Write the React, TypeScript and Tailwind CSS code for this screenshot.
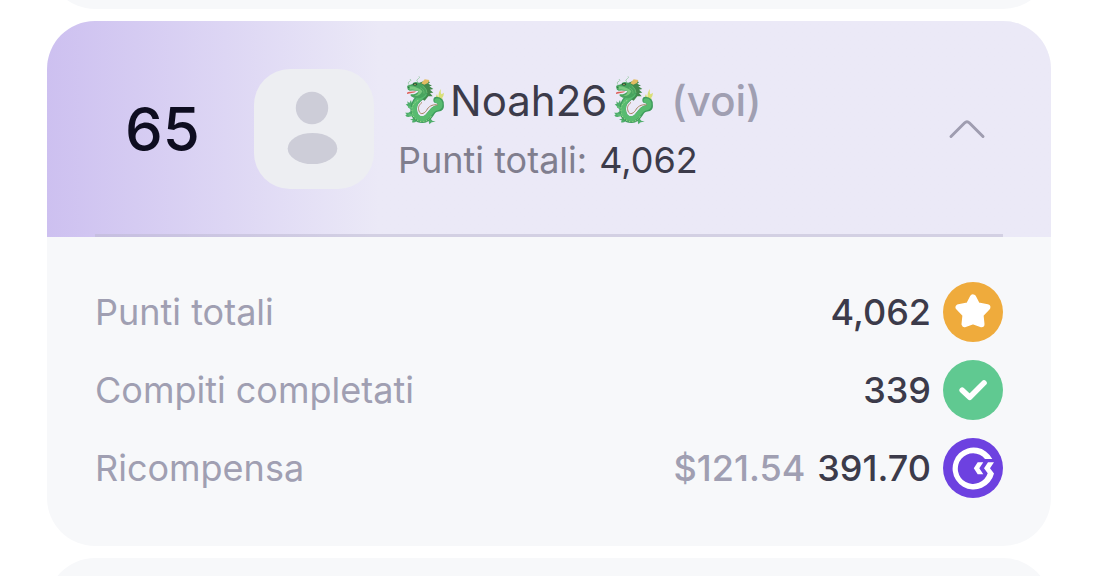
import { useState } from "react";
import type { ReactNode } from "react";

interface Stat {
  label: string;
  value: string;
  note?: string;
  icon: ReactNode;
}

const StarIcon = () => (
  <svg viewBox="0 0 60 60" className="size-15" aria-hidden="true">
    <circle cx="30" cy="30" r="30" fill="#efab3c" />
    <path
      d="M30 15.500L34 23.300L44.200 25.300L37.300 32.500L38.300 42L30 38.900L21.700 42L22.700 32.500L15.800 25.300L26 23.300Z"
      fill="#fff"
      stroke="#fff"
      strokeWidth="6.400"
      strokeLinejoin="round"
    />
  </svg>
);

const CheckIcon = () => (
  <svg viewBox="0 0 60 60" className="size-15" aria-hidden="true">
    <circle cx="30" cy="30" r="30" fill="#60c991" />
    <path
      d="M19.200 30.200L26.700 37.300L41 22.900"
      fill="none"
      stroke="#fff"
      strokeWidth="5.600"
      strokeLinecap="round"
      strokeLinejoin="round"
    />
  </svg>
);

const CoinIcon = () => (
  <svg viewBox="0 0 60 60" className="size-15" aria-hidden="true">
    <circle cx="30" cy="30" r="30" fill="#6d41e0" />
    <path
      d="M49.300 21A21 21 0 1 0 51 35.500L47 30.200L51 24.200H45L41 30.200L44.700 35.300A15.300 15.300 0 1 1 42 21Z"
      fill="#fff"
    />
    <path d="M34.700 24.200H40.300L36.300 30.200L40.300 36.200H34.700L30.800 30.200Z" fill="#fff" />
  </svg>
);

const Dragon = () => (
  <svg
    viewBox="0 0 156 174"
    className="inline-block h-[58px] w-[52px] align-middle"
    role="img"
    aria-label="🐉"
  >
    {/* tail tuft and feet */}
    <path
      d="M116 84Q112 72 117 66Q119 74 122 75Q120 62 129 51Q127 65 131 67L138 62Q138 72 131 80L135 79Q129 92 118 94Z"
      fill="#d9df78"
    />
    <path
      d="M46 112Q32 112 29 103L23 97L29 96L28 88L34 93L39 84L42 96L49 102ZM44 128Q32 140 22 131L26 127L21 122L31 122L44 115ZM62 138Q54 155 42 151L44 145L36 143L47 139L54 130ZM96 138L103 146L113 149L101 151L94 157L92 148L84 140Z"
      fill="#4fae6b"
    />
    {/* mane */}
    <path
      d="M62 33L86 24L96 31L91 35L102 41L94 43L106 51L96 53L106 62L96 63L104 73L91 73L80 86L66 78Z"
      fill="#438a4d"
    />
    <path d="M70 34L80 22L94 24L90 33L79 38Z" fill="#e3bc62" />
    {/* body */}
    <path
      d="M78 66C58 84 47 90 47 111C47 133 59 144 75 143C96 142 97 117 112 111C121 107 128 111 128 101C130 90 123 84 116 84"
      fill="none"
      stroke="#3f9c5d"
      strokeWidth="20"
      strokeLinecap="round"
    />
    <path
      d="M78 67C58 84 49 91 49 111C49 132 60 141 74 140C94 138 96 115 112 109C120 107 125 109 126 100C127 91 123 86 117 86"
      fill="none"
      stroke="#58bb70"
      strokeWidth="15"
      strokeLinecap="round"
    />
    <path
      d="M72 91C61 101 60 107 63 117C68 132 82 123 88 111C94 101 109 96 119 99"
      fill="none"
      stroke="#a98463"
      strokeWidth="3"
    />
    <path
      d="M61 85C44 94 39 106 43 124C46 140 61 150 77 149C91 146 96 140 101 130"
      fill="none"
      stroke="#9bdb88"
      strokeWidth="3"
      strokeDasharray="5 4"
    />
    <path d="M49 116L41 108L31 104M50 126L40 130L31 127" fill="none" stroke="#5fbd75" strokeWidth="6" />
    {/* head */}
    <path
      d="M28 48Q25 39 35 39L43 36Q48 27 59 31L72 37Q89 49 85 63Q80 76 64 79Q47 80 38 72L38 67Q55 68 62 57Q48 55 35 56Q28 54 28 48Z"
      fill="#48a45f"
    />
    <path d="M35 43Q49 43 57 47Q69 50 73 58Q67 73 49 72Q62 67 62 57Q48 51 35 53Z" fill="#7cca81" />
    <path d="M55 58Q50 63 41 63L27 66Q26 58 37 59Z" fill="#df625c" />
    <ellipse cx="51" cy="37" rx="7" ry="4" fill="#2c593b" />
    <circle cx="51" cy="37" r="2" fill="#e3c95d" />
    <circle cx="32" cy="46" r="2" fill="#2c713f" />
    <path
      d="M35 40Q26 31 36 28Q41 25 36 21M60 32Q52 23 61 20Q67 17 63 13"
      fill="none"
      stroke="#83c391"
      strokeWidth="2"
    />
    <path d="M66 47Q79 52 78 65M74 42Q88 51 87 63" fill="none" stroke="#68b66f" strokeWidth="3" />
  </svg>
);

const stats: Stat[] = [
  { label: "Punti totali", value: "4,062", icon: <StarIcon /> },
  { label: "Compiti completati", value: "339", icon: <CheckIcon /> },
  { label: "Ricompensa", value: "391.70", note: "$121.54", icon: <CoinIcon /> },
];

const Avatar = () => (
  <svg
    viewBox="0 0 120 120"
    className="size-30 shrink-0 rounded-[36px] bg-[#edeef2]"
    aria-hidden="true"
  >
    <circle cx="58" cy="39" r="16.200" fill="#cdcdd8" />
    <ellipse cx="58.500" cy="79.500" rx="24.800" ry="15.600" fill="#cdcdd8" />
  </svg>
);

const PlayerCard = () => {
  const [open, setOpen] = useState(true);

  return (
    <section className="shrink-0 overflow-hidden rounded-[48px] bg-[#f7f8fa]">
      <button
        type="button"
        aria-expanded={open}
        onClick={() => setOpen(!open)}
        className="block w-full bg-linear-to-r from-[#cdc0f0] to-[#ebe9f7] to-33% px-12 pt-12 text-left"
      >
        <span className="flex items-center gap-6 border-b-3 border-[#bcb8cf]/50 pb-[45px]">
          <span className="w-[135px] text-center text-[60px] leading-15 font-medium text-[#0e0d20]">
            65
          </span>
          <Avatar />
          <span className="min-w-0 flex-1">
            <span className="flex h-[62px] items-center gap-3 text-[42px] leading-[62px] text-[#3c3b4a]">
              <span className="flex items-center">
                <Dragon />
                Noah26
                <Dragon />
              </span>
              <span className="font-medium text-[#a09fb2]">(voi)</span>
            </span>
            <span className="flex gap-3 text-4xl leading-14 text-[#807e8e]">
              <span>Punti totali:</span>
              <span className="text-[#3c3b4a]">4,062</span>
            </span>
          </span>
          <svg
            viewBox="0 0 72 72"
            className={open ? "size-18 shrink-0" : "size-18 shrink-0 rotate-180"}
            aria-hidden="true"
          >
            <path
              d="M20 43.500L33.500 30Q36 27.500 38.500 30L52 43.500"
              fill="none"
              stroke="#9f9db0"
              strokeWidth="3"
              strokeLinecap="round"
            />
          </svg>
        </span>
      </button>
      {open && (
        <dl className="flex flex-col gap-[18px] px-12 pt-[45px] pb-12 text-4xl leading-15">
          {stats.map((stat) => (
            <div key={stat.label} className="flex items-center justify-between">
              <dt className="text-[#a09fb2]">{stat.label}</dt>
              <dd className="flex items-center gap-3 font-medium text-[#3c3b4a]">
                {stat.note && <span className="text-[#a09fb2]">{stat.note}</span>}
                <span>{stat.value}</span>
                {stat.icon}
              </dd>
            </div>
          ))}
        </dl>
      )}
    </section>
  );
};

const App = () => (
  <main className="flex h-screen flex-col gap-3 overflow-hidden bg-white pr-12 pl-[47px] font-['Inter',sans-serif]">
    {/* neighbouring rows of the list, scrolled mostly out of view */}
    <div className="flex h-[9px] shrink-0 flex-col justify-end overflow-hidden">
      <div className="h-30 shrink-0 rounded-[48px] bg-[#f7f8fa]" />
    </div>
    <PlayerCard />
    <div className="h-54 shrink-0 rounded-[48px] bg-[#f7f8fa]" />
  </main>
);

export default App;
